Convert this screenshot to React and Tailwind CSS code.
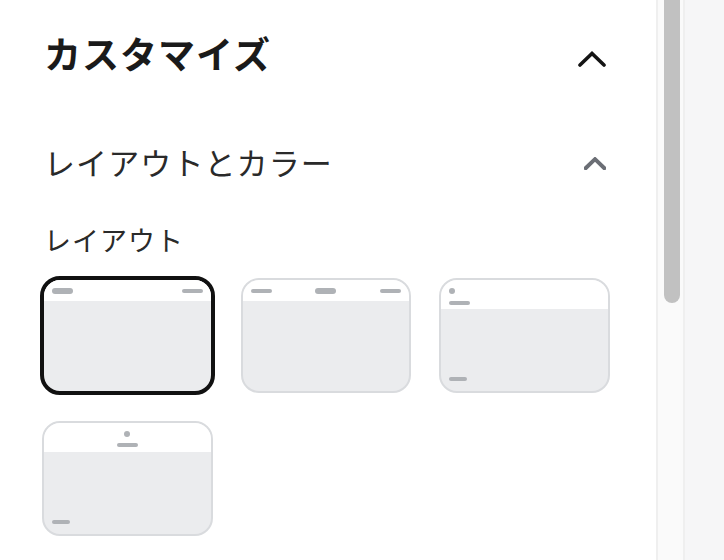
const Bar = ({ className = "" }) => <div className={`rounded-full bg-[#afb2b6] ${className}`} />;

const Chevron = ({ className, strokeWidth }) => (
  <svg viewBox="0 0 28 16" fill="none" className={className} stroke="currentColor" strokeWidth={strokeWidth} strokeLinecap="round" strokeLinejoin="miter">
    <path d="M2 14 L14 2.5 L26 14" />
  </svg>
);

function Card({ selected, headerClass, header, body }) {
  return (
    <div className={`h-[115px] rounded-[18px] overflow-hidden flex flex-col bg-[#ebecee] border-2 ${selected ? "border-[#111111] outline-[3px] -outline-offset-1 outline-[#111111]" : "border-[#d9dbde]"}`}>
      <div className={`bg-white shrink-0 ${headerClass}`}>{header}</div>
      <div className="flex-1 flex items-end px-[8px] pb-[10px]">{body}</div>
    </div>
  );
}

export default function App() {
  return (
    <div className="flex h-[560px] w-[724px] overflow-hidden bg-white font-['Noto_Sans_CJK_JP','Noto_Sans',sans-serif]">
      <main className="w-[656px] shrink-0 pl-[42px] pr-[46px] pt-[26px]">
        <div className="flex items-center justify-between h-[56px]">
          <h1 className="ml-[2px] -mt-[2px] text-[37px] leading-[56px] font-bold text-[#1a1a1a] tracking-[1px]">カスタマイズ</h1>
          <Chevron className="w-[28px] h-[16px] mt-[10px] mr-[4px] text-[#141414]" strokeWidth={3.6} />
        </div>
        <div className="flex items-center justify-between mt-[58px] h-[44px]">
          <h2 className="ml-[2px] text-[31px] leading-[44px] font-normal text-[#2a2a2a] tracking-[1.1px]">レイアウトとカラー</h2>
          <Chevron className="w-[22px] h-[13px] mt-[3px] mr-[4px] text-[#6b6e75]" strokeWidth={5} />
        </div>
        <div className="ml-[2px] mt-[37px] text-[27px] leading-[38px] text-[#2a2a2a] tracking-[1px]">レイアウト</div>
        <div className="grid grid-cols-3 gap-[28px] mt-[19px]">
          <Card
            selected
            headerClass="h-[21px] flex items-center justify-between px-[8px]"
            header={<><Bar className="w-[21px] h-[6px]" /><Bar className="w-[21px] h-[4px]" /></>}
          />
          <Card
            headerClass="h-[21px] flex items-center justify-between px-[8px]"
            header={<><Bar className="w-[21px] h-[4px]" /><Bar className="w-[21px] h-[6px]" /><Bar className="w-[21px] h-[4px]" /></>}
          />
          <Card
            headerClass="h-[29px] flex flex-col items-start gap-[7px] px-[8px] pt-[8px]"
            header={<><Bar className="w-[6px] h-[6px]" /><Bar className="w-[21px] h-[4px]" /></>}
            body={<Bar className="w-[18px] h-[4px]" />}
          />
          <Card
            headerClass="h-[29px] flex flex-col items-center gap-[6px] pt-[8px]"
            header={<><Bar className="w-[6px] h-[6px]" /><Bar className="w-[21px] h-[4px]" /></>}
            body={<Bar className="w-[18px] h-[4px]" />}
          />
        </div>
      </main>
      <aside className="w-[29px] shrink-0 bg-[#fafafa] border-x-2 border-[#efefef] pl-[6px]">
        <div className="w-[16px] h-[303px] bg-[#c1c1c1] rounded-b-[8px]" />
      </aside>
      <div className="flex-1 bg-[#f6f6f7]" />
    </div>
  );
}
